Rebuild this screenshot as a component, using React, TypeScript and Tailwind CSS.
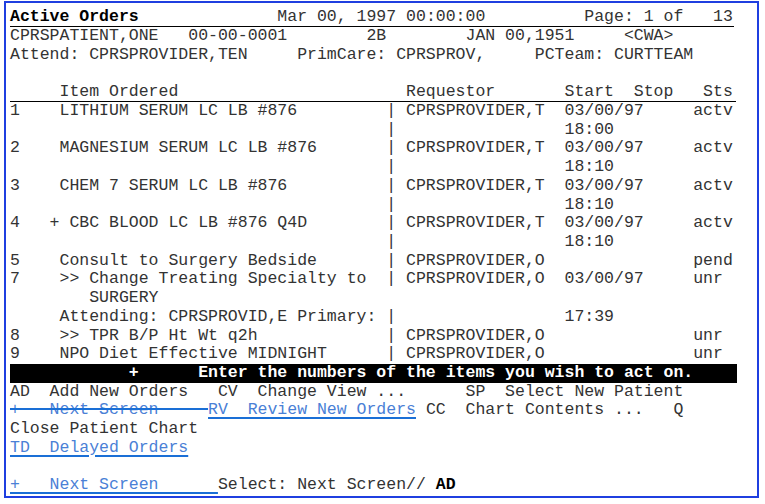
import React from "react";

function cols(segs: Array<[number, string]>): string {
  let s = "";
  for (const [c, t] of segs) {
    if (s.length < c) s += " ".repeat(c - s.length);
    s += t;
  }
  return s;
}

function Row({ children, className = "" }: { children?: React.ReactNode; className?: string }) {
  return <div className={`h-[18.72px] leading-[18.72px] whitespace-pre ${className}`}>{children}</div>;
}

function item(n: string, col: number, text: string, req: string, start: string, sts: string) {
  return cols([[0, n], [col, text], [38, "|"], [40, req], [56, start], [69, sts]]);
}
function cont(time: string) {
  return cols([[38, "|"], [56, time]]);
}

export default function App() {
  return (
    <div className="w-[765px] h-[504px] bg-white overflow-hidden">
      <div className="ml-[4px] mt-[1px] w-[755px] h-[497px] border-2 border-[#1f3fe0] pl-[4px] pt-[5.4px] font-['Liberation_Mono','Courier_New',monospace] text-[16.5px] text-[#333]">
        <Row className="border-b border-black w-[724px]">
          <span className="font-bold text-black">Active Orders</span>
          {cols([[0, "Active Orders"], [27, "Mar 00, 1997 00:00:00"], [58, "Page: 1 of   13"]]).slice(13)}
        </Row>
        <Row>{cols([[0, "CPRSPATIENT,ONE"], [18, "00-00-0001"], [36, "2B"], [46, "JAN 00,1951"], [62, "<CWA>"]])}</Row>
        <Row>{cols([[0, "Attend: CPRSPROVIDER,TEN"], [29, "PrimCare: CPRSPROV,"], [53, "PCTeam: CURTTEAM"]])}</Row>
        <Row> </Row>
        <Row className="border-b border-black w-[726px]">
          {cols([[5, "Item Ordered"], [40, "Requestor"], [56, "Start"], [63, "Stop"], [70, "Sts"]])}
        </Row>
        <Row>{item("1", 5, "LITHIUM SERUM LC LB #876", "CPRSPROVIDER,T", "03/00/97", "actv")}</Row>
        <Row>{cont("18:00")}</Row>
        <Row>{item("2", 5, "MAGNESIUM SERUM LC LB #876", "CPRSPROVIDER,T", "03/00/97", "actv")}</Row>
        <Row>{cont("18:10")}</Row>
        <Row>{item("3", 5, "CHEM 7 SERUM LC LB #876", "CPRSPROVIDER,T", "03/00/97", "actv")}</Row>
        <Row>{cont("18:10")}</Row>
        <Row>{item("4", 4, "+ CBC BLOOD LC LB #876 Q4D", "CPRSPROVIDER,T", "03/00/97", "actv")}</Row>
        <Row>{cont("18:10")}</Row>
        <Row>{item("5", 5, "Consult to Surgery Bedside", "CPRSPROVIDER,O", "", "pend")}</Row>
        <Row>{item("7", 5, ">> Change Treating Specialty to", "CPRSPROVIDER,O", "03/00/97", "unr")}</Row>
        <Row>{cols([[8, "SURGERY"]])}</Row>
        <Row>{cols([[5, "Attending: CPRSPROVID,E Primary:"], [38, "|"], [56, "17:39"]])}</Row>
        <Row>{item("8", 5, ">> TPR B/P Ht Wt q2h", "CPRSPROVIDER,O", "", "unr")}</Row>
        <Row>{item("9", 5, "NPO Diet Effective MIDNIGHT", "CPRSPROVIDER,O", "", "unr")}</Row>
        <Row className="w-[727px] bg-black text-white font-bold">
          {cols([[12, "+"], [19, "Enter the numbers of the items you wish to act on."]])}
        </Row>
        <Row>
          {cols([[0, "AD"], [4, "Add New Orders"], [21, "CV"], [25, "Change View ..."], [46, "SP"], [50, "Select New Patient"]])}
        </Row>
        <Row>
          <span className="text-[#4a80d6] line-through decoration-2 decoration-[#1a6fd6]">{"+   Next Screen     "}</span>
          <span className="text-[#4a80d6] underline decoration-2 underline-offset-[3px] decoration-[#1a6fd6]">RV  Review New Orders</span>
          {cols([[41, " "], [42, "CC"], [46, "Chart Contents ..."], [67, "Q"]]).slice(41)}
        </Row>
        <Row>Close Patient Chart</Row>
        <Row>
          <span className="text-[#4a80d6] underline decoration-2 underline-offset-[3px] decoration-[#1a6fd6]">TD  Delayed Orders</span>
        </Row>
        <Row> </Row>
        <Row>
          <span className="text-[#4a80d6] underline decoration-2 underline-offset-[3px] decoration-[#1a6fd6]">{"+   Next Screen      "}</span>
          {"Select: Next Screen// "}
          <span className="font-bold text-black">AD</span>
        </Row>
      </div>
    </div>
  );
}
